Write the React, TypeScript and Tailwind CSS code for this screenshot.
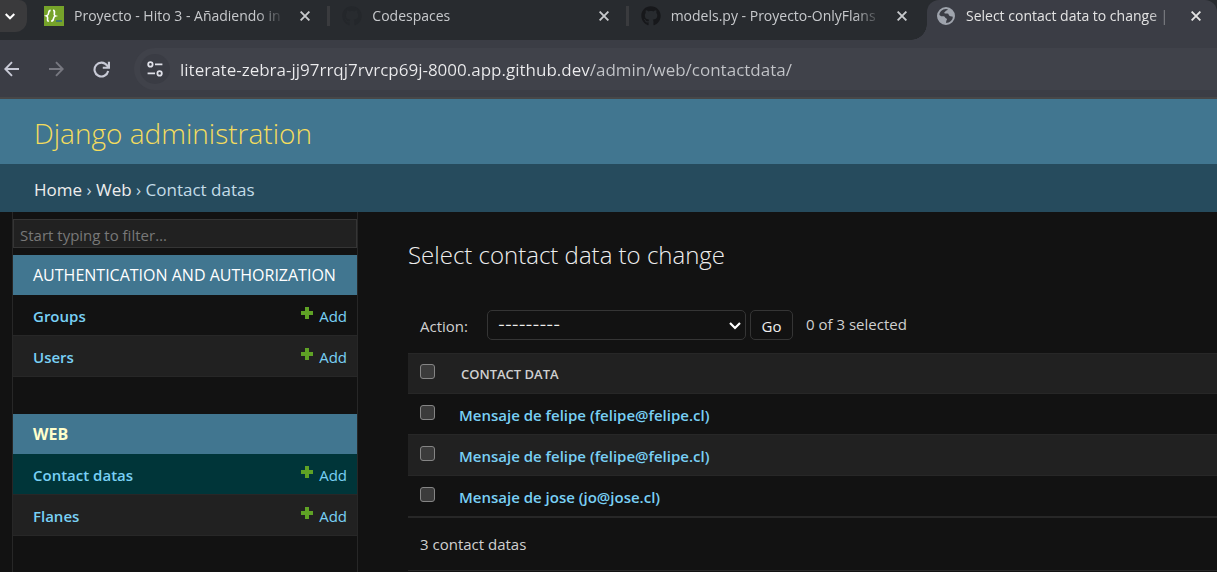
import { useState } from "react";
import type { ReactNode } from "react";
import { FaGithub } from "react-icons/fa";

type Tab = { title: string; icon: ReactNode; active?: boolean };

function BracesIcon() {
  return (
    <svg viewBox="0 0 20 20" className="size-5" fill="none" stroke="#fff" strokeWidth="1.6">
      <rect width="20" height="20" fill="#76a32a" stroke="none" />
      <path d="M6.6 4.4C4.8 4.4 4.8 5.6 4.6 7C4.4 8.8 4 9.6 2.6 9.9C3.6 10.3 3.8 11 3.6 12.6C3.4 14.2 3.4 15.1 4.8 15.1" />
      <path d="M9 4.4C10.8 4.4 10.6 5.6 10.4 7C10.1 8.8 10.3 9.6 11.3 9.9C10 10.3 9.7 11 9.5 12.6C9.3 14.2 8.9 15.1 7.2 15.1" />
      <path d="M12 15H18" stroke="#43766e" strokeWidth="2" />
    </svg>
  );
}

function GlobeIcon() {
  return (
    <svg viewBox="0 0 18 18" className="mx-px size-[18px]">
      <circle cx="9" cy="9" r="8" fill="#3b3d45" stroke="#9fa4ad" strokeWidth="2" />
      <path
        d="M2 7.5C3 9 4.2 9.3 5.4 9.2C7 9.1 7.8 9.5 8.2 10.5C8.5 11.3 9.4 11.4 9.9 11.9C10.4 12.6 9 13.4 9.2 14.4C9.3 15.4 9 16.2 8.3 16.6C4.5 16.4 1.5 13.3 1.3 9Z"
        fill="#9fa4ad"
      />
      <path
        d="M10.8 1.6C11.2 2.7 10.4 3.3 9.4 3.5C8.4 3.7 8.7 4.6 7.8 4.9C7 5.2 7.2 6.3 8 6.5C9.2 6.7 11 6 11.5 7.2C11.9 8.2 12.4 9 13.5 9.2C14.9 9.4 15.6 10.2 16.6 9.6C17.3 5.6 14.6 2 10.8 1.6Z"
        fill="#9fa4ad"
      />
    </svg>
  );
}

const tabs: Tab[] = [
  { title: "Proyecto - Hito 3 - Añadiendo in", icon: <BracesIcon /> },
  { title: "Codespaces", icon: <FaGithub className="size-5 text-[#24272b]" /> },
  { title: "models.py - Proyecto-OnlyFlans", icon: <FaGithub className="size-5 text-[#17181b]" /> },
  { title: "Select contact data to change |", icon: <GlobeIcon />, active: true },
];

function CloseIcon() {
  return (
    <svg viewBox="0 0 10 10" className="size-[10px]" stroke="currentColor" strokeWidth="1.9">
      <path d="M0.6 0.6L9.4 9.4M9.4 0.6L0.6 9.4" />
    </svg>
  );
}

function TabStrip() {
  return (
    <div className="flex h-10 bg-[#282b2f]">
      <button
        aria-label="Search tabs"
        className="mr-[5px] flex h-8 w-[27px] shrink-0 items-center rounded-br-xl rounded-tr-lg bg-[#3a3a3c] pl-[5px] text-white"
      >
        <svg viewBox="0 0 10 7" className="h-[7px] w-[10px]" fill="none" stroke="currentColor" strokeWidth="2">
          <path d="M0.7 1L5 5.3L9.3 1" />
        </svg>
      </button>
      {tabs.map((tab, index) => (
        <div
          key={tab.title}
          className={
            tab.active
              ? "relative flex w-[290px] shrink-0 items-center rounded-t-xl bg-[#3b3d45] pb-[9px] pl-[9px] pr-4 text-[#e3e3e3]"
              : "flex min-w-0 flex-1 items-center pb-[9px] pl-3 text-[#c7c9cc]"
          }
        >
          {tab.active && (
            <span className="absolute -left-4 bottom-0 size-4 bg-[radial-gradient(circle_at_0_0,#282b2f_15.5px,#3b3d45_16px)]" />
          )}
          <span className="shrink-0">{tab.icon}</span>
          <span className="ml-[10px] min-w-0 flex-1 overflow-hidden whitespace-nowrap text-[14px] leading-[30px] [mask-image:linear-gradient(to_right,#000_calc(100%-28px),transparent)]">
            {tab.title}
          </span>
          <button aria-label={`Close ${tab.title}`} className="ml-[15px] flex size-[10px] shrink-0 items-center">
            <CloseIcon />
          </button>
          {!tab.active && (
            <span className={index < 2 ? "ml-[17px] h-5 w-[3px] bg-[#3a3b3e]" : "ml-[17px] h-5 w-[3px]"} />
          )}
        </div>
      ))}
    </div>
  );
}

function Toolbar() {
  return (
    <div className="flex items-center border-b-2 border-[#474747] bg-[#3b3d45] pb-[7px] pl-1 pt-2 text-[#c8cad6]">
      <button aria-label="Back">
        <svg viewBox="0 0 16 16" className="size-4" fill="none" stroke="currentColor" strokeWidth="1.9">
          <path d="M15 8H1.5M8 1.2L1.3 8L8 14.8" />
        </svg>
      </button>
      <button aria-label="Forward" className="ml-7 text-[#777880]">
        <svg viewBox="0 0 16 16" className="size-4" fill="none" stroke="currentColor" strokeWidth="1.9">
          <path d="M1 8H14.5M8 1.2L14.7 8L8 14.8" />
        </svg>
      </button>
      <button aria-label="Reload" className="ml-[29px]">
        <svg viewBox="0 0 16 16" className="size-[17px]" fill="none" stroke="currentColor" strokeWidth="2">
          <path d="M14.3 9.4A6.5 6.5 0 1 1 13.2 4.2L14.4 6" />
          <path d="M15 0.8V6.4H9.2" />
        </svg>
      </button>
      <div className="ml-6 flex h-[42px] min-w-0 flex-1 items-center rounded-l-full bg-[#40424a] pl-[6px]">
        <button
          aria-label="View site information"
          className="flex size-[30px] shrink-0 items-center justify-center rounded-full bg-[#3a3c44] text-[#dfe0e8]"
        >
          <svg viewBox="0 0 16 16" className="size-4" fill="none" stroke="currentColor" strokeWidth="1.8">
            <circle cx="3.4" cy="3.4" r="2.2" />
            <circle cx="12.6" cy="12.4" r="2.2" />
            <path d="M8 3.4H15.4M0.6 12.4H8" />
          </svg>
        </button>
        <input
          aria-label="Address"
          defaultValue="literate-zebra-jj97rrqj7rvrcp69j-8000.app.github.dev/admin/web/contactdata/"
          className="ml-[10px] min-w-0 flex-1 bg-[linear-gradient(to_right,#ececee_410px,#c3c5c9_410px)] bg-clip-text pt-0.5 text-[17px] leading-6 text-transparent caret-white outline-none"
        />
      </div>
    </div>
  );
}

function AddLink() {
  return (
    <a href="#add" className="flex items-center justify-end gap-[5px]">
      <svg viewBox="0 0 14 14" className="mb-[7px] size-[14px]" fill="#5fa225">
        <path d="M5 1H9V5H13V9H9V13H5V9H1V5H5Z" />
      </svg>
      Add
    </a>
  );
}

type Model = { name: string; current?: boolean };

function AppModule({ name, current, models }: { name: string; current?: boolean; models: Model[] }) {
  return (
    <table className="mb-[37px] w-full border-separate border-spacing-0">
      <caption className="h-10 overflow-hidden whitespace-nowrap bg-[#417690] px-5 text-left text-[16px] leading-10">
        <a href="#app" className={current ? "font-bold text-[#ffffcc]" : "text-white"}>
          {name}
        </a>
      </caption>
      <tbody className="text-[15px] text-[#79d0f5]">
        {models.map((model) => (
          <tr
            key={model.name}
            className={
              model.current
                ? "h-[41px] bg-[#003539] *:border-b *:border-[#272727]"
                : "h-[41px] *:border-b *:border-[#272727] odd:bg-[#121212] even:bg-[#212121]"
            }
          >
            <th scope="row" className="pl-5 pt-0.5 text-left font-semibold">
              <a href="#model">{model.name}</a>
            </th>
            <td className="pr-[10px] pt-0.5">
              <AddLink />
            </td>
          </tr>
        ))}
      </tbody>
    </table>
  );
}

function Sidebar() {
  return (
    <nav className="ml-3 w-[346px] shrink-0 border-x border-[#272727] pt-[7px]" aria-label="Sidebar">
      <input
        type="search"
        aria-label="Filter navigation items"
        placeholder="Start typing to filter…"
        className="mb-[7px] block h-[29px] w-full border border-[#353535] bg-[#212121] px-[6px] pt-0.5 text-[15px] leading-6 outline-none placeholder:text-[#787878]"
      />
      <AppModule name="AUTHENTICATION AND AUTHORIZATION" models={[{ name: "Groups" }, { name: "Users" }]} />
      <AppModule name="WEB" current models={[{ name: "Contact datas", current: true }, { name: "Flanes" }]} />
    </nav>
  );
}

const checkbox =
  "block size-[15px] appearance-none rounded-[3px] border border-[#858585] bg-[#3b3b3b] checked:bg-[#79d0f5]";

const messages = [
  "Mensaje de felipe (felipe@felipe.cl)",
  "Mensaje de felipe (felipe@felipe.cl)",
  "Mensaje de jose (jo@jose.cl)",
];

function ChangeList() {
  const [selected, setSelected] = useState<boolean[]>(messages.map(() => false));
  const count = selected.filter(Boolean).length;
  return (
    <main className="ml-[50px] min-w-0 flex-1 pt-[27px]">
      <h1 className="text-[24px] font-light leading-8 text-[#eeeeee]">Select contact data to change</h1>
      <form className="flex items-center pb-[13px] pl-3 pt-[39px] text-[15px] leading-6" onSubmit={(e) => e.preventDefault()}>
        <label htmlFor="action" className="w-[67px] pt-0.5">
          Action:
        </label>
        <span className="relative">
          <select
            id="action"
            className="block h-[30px] w-[259px] appearance-none rounded-[5px] border border-[#353535] bg-[#121212] px-[10px] font-['Inter','Open_Sans',sans-serif] text-[#eeeeee]"
          >
            <option>---------</option>
            <option>Delete selected contact datas</option>
          </select>
          <svg
            viewBox="0 0 12 8"
            className="pointer-events-none absolute right-[5px] top-3 h-2 w-3"
            fill="none"
            stroke="#fff"
            strokeWidth="2.2"
          >
            <path d="M1 1L6 6L11 1" />
          </svg>
        </span>
        <button className="ml-1 h-[30px] w-[43px] rounded-[5px] border border-[#353535] pt-0.5 text-[#eeeeee]">Go</button>
        <span className="ml-[13px] pb-0.5">
          {count} of {messages.length} selected
        </span>
      </form>
      <table className="w-full border-separate border-spacing-0">
        <thead>
          <tr className="h-[41px] bg-[#212121] *:border-y *:border-[#272727]">
            <th scope="col" className="w-[51px] pb-1 pl-3">
              <input
                type="checkbox"
                aria-label="Select all contact datas"
                className={checkbox}
                checked={count === messages.length}
                onChange={(e) => setSelected(messages.map(() => e.target.checked))}
              />
            </th>
            <th scope="col" className="pl-0.5 pt-0.5 text-left text-[13px] font-semibold">
              CONTACT DATA
            </th>
          </tr>
        </thead>
        <tbody>
          {messages.map((message, index) => (
            <tr
              key={index}
              className="h-[41px] *:border-b *:border-[#272727] last:h-[42px] last:*:border-b-2 even:bg-[#212121]"
            >
              <td className="pb-1 pl-3">
                <input
                  type="checkbox"
                  aria-label={`Select ${message}`}
                  className={checkbox}
                  checked={selected[index]}
                  onChange={() => setSelected(selected.map((value, i) => (i === index ? !value : value)))}
                />
              </td>
              <th scope="row" className="pt-0.5 text-left text-[15px] font-semibold text-[#79d0f5]">
                <a href="#change">{message}</a>
              </th>
            </tr>
          ))}
        </tbody>
      </table>
      <p className="border-b border-[#272727] px-3 py-[14px] text-[15px] leading-6">3 contact datas</p>
    </main>
  );
}

export default function App() {
  return (
    <div className="flex h-screen flex-col overflow-hidden bg-[#121212] font-['Open_Sans','Noto_Sans',sans-serif] text-[#d0d0d0]">
      <TabStrip />
      <Toolbar />
      <header className="bg-[#417690] px-[34px] pb-[13px] pt-4 text-[28px] font-light leading-9 text-[#f5dd5d]">
        <a href="#home">Django administration</a>
      </header>
      <nav aria-label="Breadcrumbs" className="bg-[#264b5d] px-[34px] pb-[10px] pt-[14px] text-[17px] leading-6 text-[#c4dce8]">
        <a href="#home" className="text-[#eeeeee]">Home</a> › <a href="#web" className="text-[#eeeeee]">Web</a> › Contact datas
      </nav>
      <div className="flex min-h-0 flex-1">
        <Sidebar />
        <ChangeList />
      </div>
    </div>
  );
}
